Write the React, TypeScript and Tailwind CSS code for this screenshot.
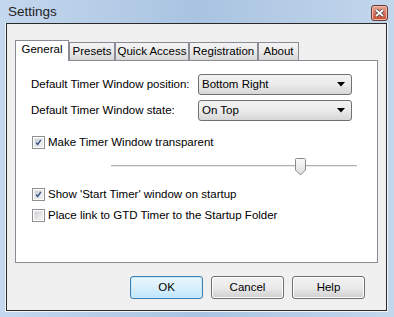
import React from "react";

const font = { fontFamily: '"Liberation Sans", Arial, sans-serif' };

function Checkbox({ checked }: { checked: boolean }) {
  return (
    <div className="w-[13px] h-[13px] border border-[#8e8f8f] bg-white p-[1px] shrink-0">
      <div className="w-full h-full bg-gradient-to-br from-[#cbcfd5] to-[#f6f6f6] border border-[#e8e8e8] flex items-center justify-center">
        {checked && (
          <svg width="9" height="9" viewBox="0 0 9 9">
            <path d="M1.5 4.5 L3.5 7 L7.5 1" fill="none" stroke="#3d5588" strokeWidth="1.8" />
          </svg>
        )}
      </div>
    </div>
  );
}

function Combo({ value }: { value: string }) {
  return (
    <div className="w-[154px] h-[21px] rounded-[3px] border border-[#707070] bg-gradient-to-b from-[#f2f2f2] via-[#ebebeb] to-[#d6d6d6] flex items-center justify-between pl-[3px] pr-[6px]">
      <span className="text-[11.5px] text-black">{value}</span>
      <svg width="8" height="5" viewBox="0 0 8 5">
        <path d="M0 0 L8 0 L4 4.5 Z" fill="#000" />
      </svg>
    </div>
  );
}

function Btn({ label, focused }: { label: string; focused?: boolean }) {
  return (
    <div
      className={
        "w-[73px] h-[23px] rounded-[3px] border flex items-center justify-center text-[11.5px] text-black " +
        (focused
          ? "border-[#3c7fb1] bg-gradient-to-b from-[#eaf6fd] via-[#d9f0fc] to-[#bee6fd] shadow-[inset_0_0_0_1px_#c7e9fb]"
          : "border-[#707070] bg-gradient-to-b from-[#f2f2f2] via-[#ebebeb] to-[#cfcfcf] shadow-[inset_0_0_0_1px_#fcfcfc]")
      }
    >
      {label}
    </div>
  );
}

function Tab({ label, w, selected }: { label: string; w: string; selected?: boolean }) {
  if (selected) {
    return (
      <div className={`${w} h-[21px] bg-white border border-b-0 border-[#898c95] flex items-center justify-center text-[11.5px] text-black relative z-10 -mb-px`}>
        <span className="-mt-[2px]">{label}</span>
      </div>
    );
  }
  return (
    <div className={`${w} h-[18px] bg-gradient-to-b from-[#f3f3f3] via-[#ebebeb] to-[#d6d6d6] border border-b-0 border-[#898c95] flex items-center justify-center text-[11.5px] text-black`}>
      {label}
    </div>
  );
}

export default function App() {
  return (
    <div style={font} className="w-[394px] h-[317px] flex flex-col bg-[#bcd2ea] bg-gradient-to-r from-[#c4d8ee] via-[#a9c3e1] to-[#c3d7ec] overflow-hidden">
      {/* title bar */}
      <div className="h-[23px] flex items-start justify-between shrink-0">
        <span className="text-[13.5px] text-[#1e1e1e] pl-[8px] pt-[4px] leading-[16px]">Settings</span>
        <div className="mt-[5px] mr-[6px] w-[17px] h-[16px] rounded-[3px] border border-[#6b3a32] bg-gradient-to-b from-[#e9a99a] via-[#d7745f] to-[#c24a31] flex items-center justify-center shadow-[inset_0_0_0_1px_#f0b8aa]">
          <svg width="9" height="8" viewBox="0 0 9 8">
            <path d="M1 1 L8 7 M8 1 L1 7" stroke="#3a3a3a" strokeWidth="3.2" />
            <path d="M1 1 L8 7 M8 1 L1 7" stroke="#ffffff" strokeWidth="1.8" />
          </svg>
        </div>
      </div>
      {/* client */}
      <div className="ml-[5px] mr-[6px] mb-[5px] flex-1 border border-t-0 border-[#f2f6fb] flex">
        <div className="flex-1 border border-[#2a2a2a] bg-[#f0f0f0] flex flex-col pt-[15px] px-[8px]">
          <div className="flex items-end h-[21px] pl-0">
            <Tab label="General" w="w-[54px]" selected />
            <Tab label="Presets" w="w-[46px]" />
            <Tab label="Quick Access" w="w-[74px]" />
            <Tab label="Registration" w="w-[69px]" />
            <Tab label="About" w="w-[41px]" />
          </div>
          <div className="h-[203px] border border-[#898c95] bg-white flex flex-col pt-[13px] pl-[15px] text-[11.5px] text-black">
            <div className="flex items-center h-[21px]">
              <span className="w-[167px]">Default Timer Window position:</span>
              <Combo value="Bottom Right" />
            </div>
            <div className="flex items-center h-[21px] mt-[5px]">
              <span className="w-[167px]">Default Timer Window state:</span>
              <Combo value="On Top" />
            </div>
            <div className="flex items-center h-[13px] mt-[15px] gap-[3px] ml-[1px]">
              <Checkbox checked />
              <span>Make Timer Window transparent</span>
            </div>
            <div className="relative h-[18px] mt-[9px] ml-[80px] w-[246px]">
              <div className="absolute left-0 right-0 top-[7px] h-[3px] border-t border-[#b0b0b0] bg-[#e7eaea] border-b border-b-[#ffffff]" />
              <svg className="absolute left-[184px] top-0" width="11" height="18" viewBox="0 0 11 18">
                <defs>
                  <linearGradient id="th" x1="0" y1="0" x2="0" y2="1">
                    <stop offset="0" stopColor="#fbfbfb" />
                    <stop offset="1" stopColor="#dcdcdc" />
                  </linearGradient>
                </defs>
                <path d="M1.5 0.5 H9.5 Q10.5 0.5 10.5 1.5 V12 L5.5 17 L0.5 12 V1.5 Q0.5 0.5 1.5 0.5 Z" fill="url(#th)" stroke="#8a8a8a" />
              </svg>
            </div>
            <div className="flex items-center h-[13px] mt-[12px] gap-[3px] ml-[1px]">
              <Checkbox checked />
              <span>Show 'Start Timer' window on startup</span>
            </div>
            <div className="flex items-center h-[13px] mt-[8px] gap-[3px] ml-[1px]">
              <Checkbox checked={false} />
              <span>Place link to GTD Timer to the Startup Folder</span>
            </div>
          </div>
          <div className="flex justify-end gap-[8px] mt-[13px] pr-[13px]">
            <Btn label="OK" focused />
            <Btn label="Cancel" />
            <Btn label="Help" />
          </div>
        </div>
      </div>
    </div>
  );
}
